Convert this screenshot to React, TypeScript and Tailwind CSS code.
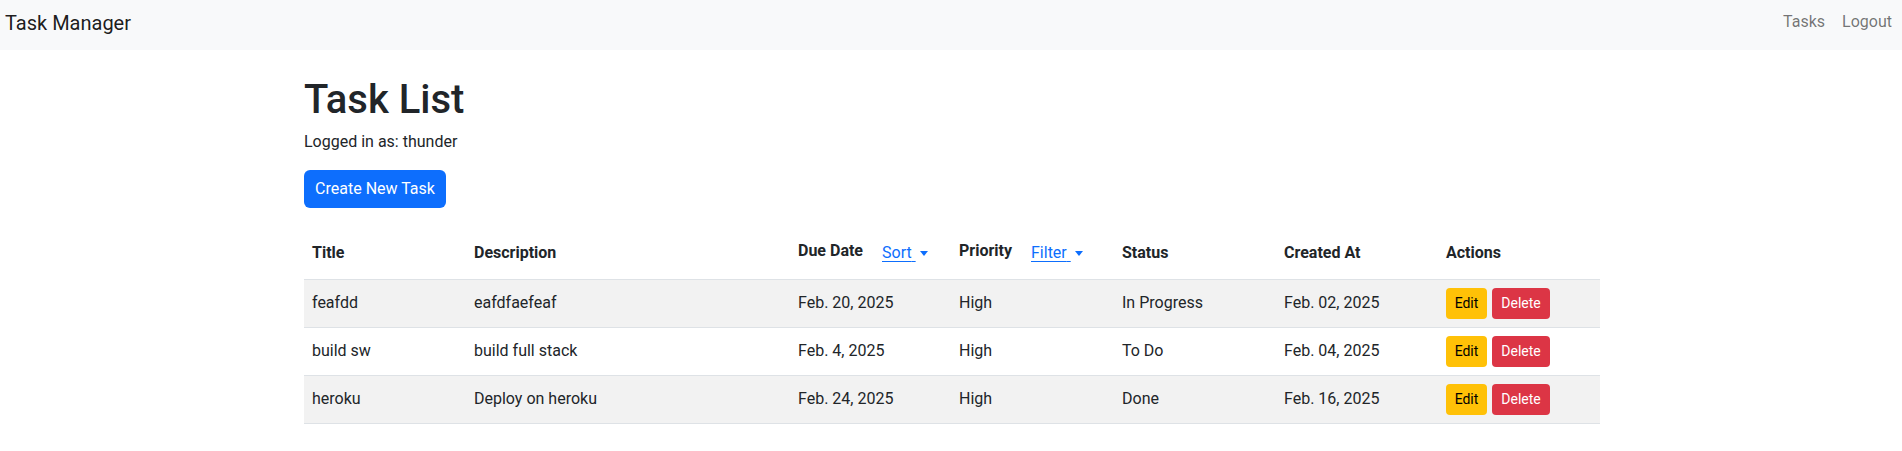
import { useState } from "react";

// ── Types ───────────────────────────────────────────────────────────────────

interface Task {
  title: string;
  description: string;
  due: string;
  priority: string;
  status: string;
  created: string;
}

const tasks: Task[] = [
  {
    title: "feafdd",
    description: "eafdfaefeaf",
    due: "Feb. 20, 2025",
    priority: "High",
    status: "In Progress",
    created: "Feb. 02, 2025",
  },
  {
    title: "build sw",
    description: "build full stack",
    due: "Feb. 4, 2025",
    priority: "High",
    status: "To Do",
    created: "Feb. 04, 2025",
  },
  {
    title: "heroku",
    description: "Deploy on heroku",
    due: "Feb. 24, 2025",
    priority: "High",
    status: "Done",
    created: "Feb. 16, 2025",
  },
];

// ── Dropdown toggle (Sort / Filter) ─────────────────────────────────────────

function LinkToggle({ label }: { label: string }) {
  const [open, setOpen] = useState(false);
  return (
    <button
      onClick={() => setOpen(!open)}
      className="ml-[7px] inline-flex items-center py-[6px] px-3 font-normal text-[#0d6efd] leading-[24px]"
    >
      <span className="underline underline-offset-[3px]">{label}&nbsp;</span>
      <span className="ml-[4px] mt-[1px] h-0 w-0 border-x-[4px] border-t-[5px] border-x-transparent border-t-[#0d6efd]" />
    </button>
  );
}

export default function App() {
  return (
    <div
      className="min-h-[451px] bg-white text-[#212529]"
      style={{ fontFamily: '"Segoe UI", Roboto, "Noto Sans", sans-serif' }}
    >
      {/* Navbar */}
      <nav className="flex h-[50px] items-start justify-between bg-[#f8f9fa]">
        <a className="pl-[5px] pt-[8px] text-[20px] leading-[30px] text-black/90">
          Task Manager
        </a>
        <div className="flex gap-[17px] pr-[10px] pt-[10px] text-[16px] leading-[24px] text-black/55">
          <a>Tasks</a>
          <a>Logout</a>
        </div>
      </nav>

      {/* Content */}
      <main className="mx-auto w-[1296px] translate-x-[1px]">
        <h1 className="mt-[26px] text-[40px] font-medium leading-[48px]">Task List</h1>
        <p className="mt-[6px] text-[16px] leading-[24px]">Logged in as: thunder</p>
        <button className="mt-[16px] h-[38px] w-[142px] rounded-[6px] bg-[#0d6efd] text-[16px] text-white">
          Create New Task
        </button>

        <table className="mt-[16px] w-full table-fixed border-collapse text-left text-[16px] leading-[24px]">
          <colgroup>
            <col className="w-[162px]" />
            <col className="w-[324px]" />
            <col className="w-[161px]" />
            <col className="w-[163px]" />
            <col className="w-[162px]" />
            <col className="w-[162px]" />
            <col className="w-[162px]" />
          </colgroup>
          <thead>
            <tr className="h-[55px] border-b border-[#dee2e6]">
              <th className="px-2 pt-[3px] align-middle font-bold">Title</th>
              <th className="px-2 pt-[3px] align-middle font-bold">Description</th>
              <th className="whitespace-nowrap px-2 pt-[3px] align-middle font-bold">
                <span className="relative -top-[2px]">Due Date</span>
                <LinkToggle label="Sort" />
              </th>
              <th className="whitespace-nowrap px-2 pt-[3px] align-middle font-bold">
                <span className="relative -top-[2px]">Priority</span>
                <LinkToggle label="Filter" />
              </th>
              <th className="px-2 pt-[3px] align-middle font-bold">Status</th>
              <th className="px-2 pt-[3px] align-middle font-bold">Created At</th>
              <th className="px-2 pt-[3px] align-middle font-bold">Actions</th>
            </tr>
          </thead>
          <tbody>
            {tasks.map((t, i) => (
              <tr
                key={t.title}
                className={`border-b border-[#dee2e6] ${i % 2 === 0 ? "bg-[#f2f2f2]" : "bg-white"}`}
              >
                <td className="h-[48px] px-2 py-2 align-middle">{t.title}</td>
                <td className="px-2 py-2 align-middle">{t.description}</td>
                <td className="px-2 py-2 align-middle">{t.due}</td>
                <td className="px-2 py-2 align-middle">{t.priority}</td>
                <td className="px-2 py-2 align-middle">{t.status}</td>
                <td className="px-2 py-2 align-middle">{t.created}</td>
                <td className="px-2 py-2 align-middle">
                  <div className="flex gap-[5px]">
                    <button className="h-[31px] w-[41px] rounded-[4px] bg-[#ffc107] text-[14px] text-black">
                      Edit
                    </button>
                    <button className="h-[31px] w-[58px] rounded-[4px] bg-[#dc3545] text-[14px] text-white">
                      Delete
                    </button>
                  </div>
                </td>
              </tr>
            ))}
          </tbody>
        </table>
      </main>
    </div>
  );
}
